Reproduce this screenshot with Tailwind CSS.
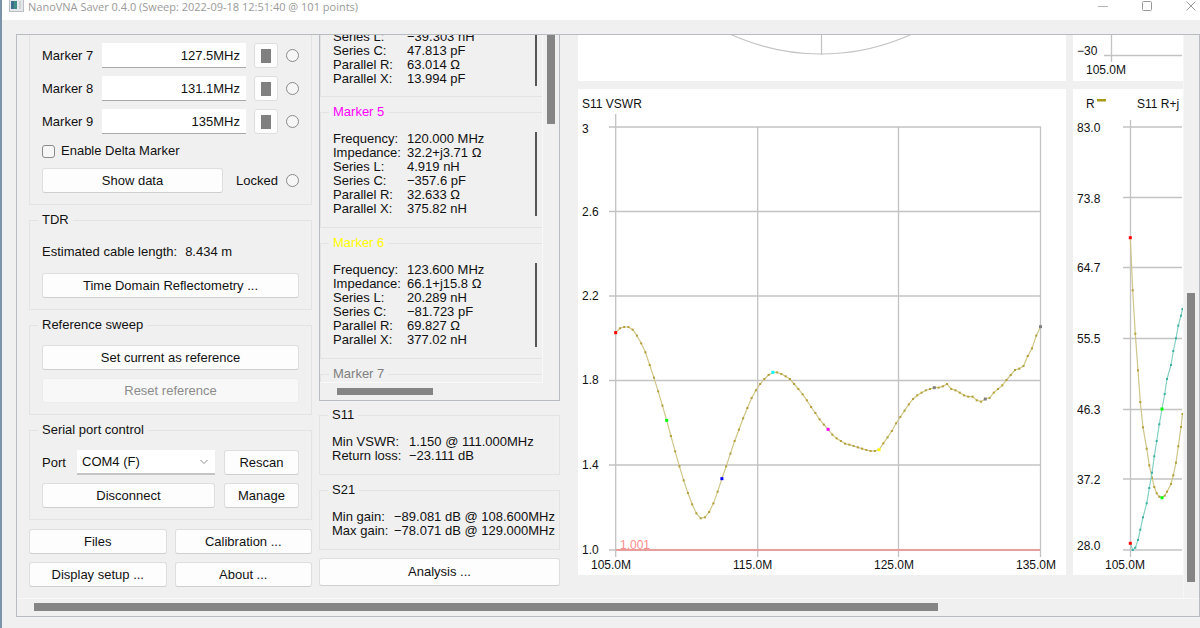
<!DOCTYPE html>
<html lang="en">
<head>
<meta charset="utf-8">
<meta name="viewport" content="width=device-width, initial-scale=1">
<title>NanoVNA Saver 0.4.0</title>
<script src="https://cdn.jsdelivr.net/npm/@tailwindcss/browser@4"></script>
</head>
<body class="flex min-h-screen flex-col overflow-x-hidden border-l-2 border-[#7b93ab] bg-[#f0f0f0] font-['Liberation_Sans',sans-serif] text-[13px] leading-5 text-[#111]">

<header class="flex h-5 items-start justify-between bg-white pl-[7px] pr-1 text-[#9a9a9a]">
  <div class="flex items-start gap-1">
    <svg class="h-3 w-[15px]" viewBox="0 0 15 12" aria-hidden="true">
      <rect x="0.500" y="-3" width="14" height="14.500" fill="#e4e8ea" stroke="#b9bfc4"/>
      <rect x="2" y="1" width="6" height="8" fill="#3f8f86"/>
      <rect x="2" y="1" width="3" height="8" fill="#3d6f8e"/>
      <rect x="10" y="1" width="2" height="8" fill="#cfd3d6"/>
    </svg>
    <h1 class="h-[14px] whitespace-nowrap font-['Open_Sans',sans-serif] text-[11px] leading-[14px]">NanoVNA Saver 0.4.0 (Sweep: 2022-09-18 12:51:40 @ 101 points)</h1>
  </div>
  <div class="flex gap-[34px]">
    <button aria-label="Minimize" class="h-3 w-[10px]"><svg viewBox="0 0 10 12" class="h-3 w-[10px]"><path d="M0 6.500H10" stroke="#b4b4b4"/></svg></button>
    <button aria-label="Maximize" class="h-3 w-[10px]"><svg viewBox="0 0 10 12" class="h-3 w-[10px]"><rect x="0.500" y="1.500" width="9" height="9" rx="1" fill="none" stroke="#999"/></svg></button>
    <button aria-label="Close" class="h-3 w-[10px]"><svg viewBox="0 0 10 12" class="h-3 w-[10px]"><path d="M0.500 1.500L9.500 10.500M9.500 1.500L0.500 10.500" stroke="#999"/></svg></button>
  </div>
</header>

<main class="mt-[14px] ml-[14px] flex flex-col border border-[#b8bbc2]">
  <div class="flex border-b border-[#f8f8f8]">
    <div class="flex min-w-0 flex-1 items-start overflow-hidden pl-3 pb-[11px]">

      <!-- Sweep and device controls -->
      <section class="flex w-[283px] shrink-0 flex-col gap-[5px]">
        <div class="flex flex-col gap-2 border border-t-0 border-[#e3e3e3] px-3 pt-2 pb-[11px]">
          <div class="flex items-center gap-2">
            <label for="m7" class="w-[52px] whitespace-nowrap">Marker 7</label>
            <input id="m7" value="127.5MHz" class="h-[25px] min-w-0 flex-1 border-b border-[#a8a8a8] bg-white pr-[6px] text-right">
            <button aria-label="Marker 7 colour" class="flex h-[25px] w-6 items-center justify-center rounded-[3px] border border-[#dedede] bg-[#fdfdfd]"><span class="h-[14px] w-[10px] bg-[#808080]"></span></button>
            <input type="radio" name="mk" aria-label="Select marker 7" class="size-[13px] appearance-none rounded-full border border-[#8a8a8a] bg-[#f6f6f6]">
          </div>
          <div class="flex items-center gap-2">
            <label for="m8" class="w-[52px] whitespace-nowrap">Marker 8</label>
            <input id="m8" value="131.1MHz" class="h-[25px] min-w-0 flex-1 border-b border-[#a8a8a8] bg-white pr-[6px] text-right">
            <button aria-label="Marker 8 colour" class="flex h-[25px] w-6 items-center justify-center rounded-[3px] border border-[#dedede] bg-[#fdfdfd]"><span class="h-[14px] w-[10px] bg-[#808080]"></span></button>
            <input type="radio" name="mk" aria-label="Select marker 8" class="size-[13px] appearance-none rounded-full border border-[#8a8a8a] bg-[#f6f6f6]">
          </div>
          <div class="flex items-center gap-2">
            <label for="m9" class="w-[52px] whitespace-nowrap">Marker 9</label>
            <input id="m9" value="135MHz" class="h-[25px] min-w-0 flex-1 border-b border-[#a8a8a8] bg-white pr-[6px] text-right">
            <button aria-label="Marker 9 colour" class="flex h-[25px] w-6 items-center justify-center rounded-[3px] border border-[#dedede] bg-[#fdfdfd]"><span class="h-[14px] w-[10px] bg-[#808080]"></span></button>
            <input type="radio" name="mk" aria-label="Select marker 9" class="size-[13px] appearance-none rounded-full border border-[#8a8a8a] bg-[#f6f6f6]">
          </div>
          <div class="flex h-[18px] items-center gap-[6px]">
            <input id="delta" type="checkbox" class="size-[13px] appearance-none rounded-[3px] border border-[#8a8a8a] bg-[#f6f6f6]">
            <label for="delta">Enable Delta Marker</label>
          </div>
          <div class="flex items-center">
            <button class="h-[25px] w-[181px] rounded-[3px] border border-[#dedede] border-b-[#cfcfcf] bg-[#fdfdfd]">Show data</button>
            <label for="locked" class="ml-auto mr-2">Locked</label>
            <input id="locked" type="radio" class="size-[13px] appearance-none rounded-full border border-[#8a8a8a] bg-[#f6f6f6]">
          </div>
        </div>

        <fieldset class="border border-[#e3e3e3] px-3 pb-[11px]">
          <legend class="-ml-1 px-1">TDR</legend>
          <p class="mt-3 flex gap-2"><span>Estimated cable length:</span><span>8.434 m</span></p>
          <button class="mt-[11px] h-[25px] w-full rounded-[3px] border border-[#dedede] border-b-[#cfcfcf] bg-[#fdfdfd]">Time Domain Reflectometry ...</button>
        </fieldset>

        <fieldset class="border border-[#e3e3e3] px-3 pb-[11px]">
          <legend class="-ml-1 px-1">Reference sweep</legend>
          <div class="mt-[10px] flex flex-col gap-2">
            <button class="h-[25px] rounded-[3px] border border-[#dedede] border-b-[#cfcfcf] bg-[#fdfdfd]">Set current as reference</button>
            <button disabled class="h-[25px] rounded-[3px] border border-[#ececec] bg-[#f8f8f8] text-[#8c8c8c]">Reset reference</button>
          </div>
        </fieldset>

        <fieldset class="border border-[#e3e3e3] px-3 pb-[11px]">
          <legend class="-ml-1 px-1">Serial port control</legend>
          <div class="mt-[10px] flex flex-col gap-2">
            <div class="flex items-center">
              <label for="port" class="w-[35px]">Port</label>
              <div class="relative flex-1">
                <select id="port" class="block h-[25px] w-full appearance-none border-b-2 border-[#c4c4c4] bg-white pl-[5px]"><option>COM4 (F)</option></select>
                <svg class="pointer-events-none absolute right-[7px] top-[9px] h-[6px] w-2" viewBox="0 0 8 6"><path d="M0.500 1L4 4.500L7.500 1" fill="none" stroke="#8f8f8f"/></svg>
              </div>
              <button class="ml-[9px] h-[25px] w-[75px] rounded-[3px] border border-[#dedede] border-b-[#cfcfcf] bg-[#fdfdfd]">Rescan</button>
            </div>
            <div class="flex gap-[9px]">
              <button class="h-[25px] flex-1 rounded-[3px] border border-[#dedede] border-b-[#cfcfcf] bg-[#fdfdfd]">Disconnect</button>
              <button class="h-[25px] w-[75px] rounded-[3px] border border-[#dedede] border-b-[#cfcfcf] bg-[#fdfdfd]">Manage</button>
            </div>
          </div>
        </fieldset>

        <div class="mt-1 grid grid-cols-2 gap-2">
          <button class="h-[25px] rounded-[3px] border border-[#dedede] border-b-[#cfcfcf] bg-[#fdfdfd]">Files</button>
          <button class="h-[25px] rounded-[3px] border border-[#dedede] border-b-[#cfcfcf] bg-[#fdfdfd]">Calibration ...</button>
          <button class="h-[25px] rounded-[3px] border border-[#dedede] border-b-[#cfcfcf] bg-[#fdfdfd]">Display setup ...</button>
          <button class="h-[25px] rounded-[3px] border border-[#dedede] border-b-[#cfcfcf] bg-[#fdfdfd]">About ...</button>
        </div>
      </section>

      <!-- Marker readouts -->
      <section class="ml-[7px] flex w-[241px] shrink-0 flex-col">
        <div class="border border-t-0 border-[#b8bbc2]">
          <div class="flex">
            <div class="flex h-[348px] flex-1 flex-col gap-[5px] overflow-hidden border-r border-b border-[#f8f8f8] leading-[14px]">
              <div class="-mt-[5px] flex shrink-0 border-b border-l border-[#e3e3e3] pr-[5px] pb-[10px] pl-3">
                <dl class="grid flex-1 grid-cols-[74px_1fr]">
                  <dt>Series L:</dt><dd>−39.303 nH</dd>
                  <dt>Series C:</dt><dd>47.813 pF</dd>
                  <dt>Parallel R:</dt><dd>63.014 Ω</dd>
                  <dt>Parallel X:</dt><dd>13.994 pF</dd>
                </dl>
                <div class="w-[2px] bg-[#555]"></div>
              </div>
              <fieldset class="shrink-0 border border-r-0 border-[#e3e3e3] pr-[5px] pb-[11px] pl-3">
                <legend class="-ml-1 px-1 leading-5 text-[#ff00ff]">Marker 5</legend>
                <div class="mt-[10px] flex">
                  <dl class="grid flex-1 grid-cols-[74px_1fr]">
                    <dt>Frequency:</dt><dd>120.000 MHz</dd>
                    <dt>Impedance:</dt><dd>32.2+j3.71 Ω</dd>
                    <dt>Series L:</dt><dd>4.919 nH</dd>
                    <dt>Series C:</dt><dd>−357.6 pF</dd>
                    <dt>Parallel R:</dt><dd>32.633 Ω</dd>
                    <dt>Parallel X:</dt><dd>375.82 nH</dd>
                  </dl>
                  <div class="w-[2px] bg-[#555]"></div>
                </div>
              </fieldset>
              <fieldset class="shrink-0 border border-r-0 border-[#e3e3e3] pr-[5px] pb-[11px] pl-3">
                <legend class="-ml-1 px-1 leading-5 text-[#ffff00]">Marker 6</legend>
                <div class="mt-[10px] flex">
                  <dl class="grid flex-1 grid-cols-[74px_1fr]">
                    <dt>Frequency:</dt><dd>123.600 MHz</dd>
                    <dt>Impedance:</dt><dd>66.1+j15.8 Ω</dd>
                    <dt>Series L:</dt><dd>20.289 nH</dd>
                    <dt>Series C:</dt><dd>−81.723 pF</dd>
                    <dt>Parallel R:</dt><dd>69.827 Ω</dd>
                    <dt>Parallel X:</dt><dd>377.02 nH</dd>
                  </dl>
                  <div class="w-[2px] bg-[#555]"></div>
                </div>
              </fieldset>
              <fieldset class="h-20 shrink-0 border border-r-0 border-[#e3e3e3] pl-3">
                <legend class="-ml-1 px-1 leading-5 text-[#808080]">Marker 7</legend>
              </fieldset>
            </div>
            <div class="w-4 pl-1"><div class="h-[89px] w-2 bg-[#858585]"></div></div>
          </div>
          <div class="h-[17px] pt-[5px] pl-[17px]"><div class="h-[7px] w-[96px] bg-[#858585]"></div></div>
        </div>

        <fieldset class="mt-1 border border-[#e3e3e3] px-3 pb-[11px]">
          <legend class="-ml-1 px-1">S11</legend>
          <dl class="mt-[10px] grid grid-cols-[77px_1fr] whitespace-nowrap leading-[14px]">
            <dt>Min VSWR:</dt><dd>1.150 @ 111.000MHz</dd>
            <dt>Return loss:</dt><dd>−23.111 dB</dd>
          </dl>
        </fieldset>
        <fieldset class="mt-[5px] border border-[#e3e3e3] pl-3 pb-[11px]">
          <legend class="-ml-1 px-1">S21</legend>
          <dl class="mt-[10px] grid grid-cols-[62px_1fr] whitespace-nowrap leading-[14px]">
            <dt>Min gain:</dt><dd>−89.081 dB @ 108.600MHz</dd>
            <dt>Max gain:</dt><dd>−78.071 dB @ 129.000MHz</dd>
          </dl>
        </fieldset>
        <button class="mt-2 h-7 rounded-[3px] border border-[#dedede] border-b-[#cfcfcf] bg-[#fdfdfd]">Analysis ...</button>
      </section>

      <!-- Charts -->
      <section class="ml-[18px] flex min-w-0 flex-1 gap-[7px]">
        <div class="flex min-w-0 flex-1 flex-col gap-2">
          <svg class="w-full bg-white" viewBox="578 35 488 46" role="img" aria-label="Smith chart">
            <circle cx="821" cy="-163" r="217" fill="none" stroke="#c2c2c2" stroke-width="1.200"/>
            <path d="M821.500 35V55" stroke="#c2c2c2" stroke-width="1.200"/>
          </svg>
          <svg class="w-full bg-white" viewBox="578 89 488 486" role="img" aria-label="S11 VSWR" font-size="12" fill="#111">
            <path d="M609 127H1041M609 211.500H1041M609 296H1041M609 380.500H1041M609 465H1041M609 550H1041M615.700 114V557M757.700 127V557M898.500 127V557M1040.500 127V557" stroke="#c3c3c3" stroke-width="1.300"/>
            <path d="M616 550H1040" stroke="#f08c8c" stroke-width="1.600"/>
            <g id="vswr"></g>
            <text x="582" y="108">S11 VSWR</text>
            <text x="582" y="133">3</text>
            <text x="582" y="216">2.6</text>
            <text x="582" y="300">2.2</text>
            <text x="582" y="384">1.8</text>
            <text x="582" y="469">1.4</text>
            <text x="582" y="554">1.0</text>
            <text x="620" y="549" fill="#ff8c8c">1.001</text>
            <text x="591" y="569">105.0M</text>
            <text x="733" y="569">115.0M</text>
            <text x="874" y="569">125.0M</text>
            <text x="1016" y="569">135.0M</text>
          </svg>
        </div>
        <div class="flex w-[110px] shrink-0 flex-col gap-2">
          <svg class="h-[46px] w-full bg-white" viewBox="1073 35 110 46" role="img" aria-label="Return loss chart" font-size="12" fill="#111">
            <path d="M1104 55.500H1182M1111.500 35V62" stroke="#c3c3c3" stroke-width="1.300"/>
            <text x="1077" y="55">−30</text>
            <text x="1086" y="74">105.0M</text>
          </svg>
          <svg class="w-full bg-white" viewBox="1073 89 110 486" role="img" aria-label="S11 R+jX" font-size="12" fill="#111">
            <path d="M1123 127H1182M1123 197.500H1182M1123 267.500H1182M1123 338.500H1182M1123 409.500H1182M1123 479H1182M1123 550H1182M1130.500 120V557" stroke="#c3c3c3" stroke-width="1.300"/>
            <rect x="1097" y="99" width="9" height="2.500" fill="#a89a18"/>
            <g id="rjx"></g>
            <text x="1086" y="108">R</text>
            <text x="1137" y="108">S11 R+j</text>
            <text x="1077" y="132">83.0</text>
            <text x="1077" y="203">73.8</text>
            <text x="1077" y="272">64.7</text>
            <text x="1077" y="343">55.5</text>
            <text x="1077" y="414">46.3</text>
            <text x="1077" y="484">37.2</text>
            <text x="1077" y="550">28.0</text>
            <text x="1105" y="569">105.0M</text>
          </svg>
        </div>
      </section>
    </div>
    <div class="w-4 shrink-0 border-l border-[#f6f6f6] pt-[258px] pl-[3px]"><div class="h-[289px] w-2 bg-[#858585]"></div></div>
  </div>
  <div class="h-[17px] pt-1 pl-[17px]"><div class="h-2 w-[78%] max-w-[904px] bg-[#858585]"></div></div>
</main>

<script>
  const NS = 'http://www.w3.org/2000/svg';
  function add(parent, tag, attrs) {
    const el = document.createElementNS(NS, tag);
    for (const k in attrs) el.setAttribute(k, attrs[k]);
    parent.appendChild(el);
  }
  // Draws a sweep: a thin line, a small square per sample, larger squares for markers.
  function series(id, pts, line, dot, markers) {
    const g = document.getElementById(id);
    add(g, 'polyline', { points: pts.map(p => p.join(',')).join(' '), fill: 'none', stroke: line, 'stroke-width': 1.2 });
    pts.forEach(([x, y], i) => {
      const s = markers[i] ? 3 : 2;
      add(g, 'rect', { x: x - s / 2, y: y - s / 2, width: s, height: s, fill: markers[i] || dot });
    });
  }
  // Sample heights in thirds of a pixel, measured down from y = 300.
  const v = [98,85,81,81,89,107,130,157,195,233,274,317,361,408,454,499,541,579,613,640,655,652,636,610,575,536,499,461,423,389,355,324,294,271,252,237,225,217,217,222,229,237,252,267,283,301,321,339,358,374,388,
    404,415,423,431,434,438,442,446,450,453,453,449,430,412,393,370,351,332,313,297,286,278,271,267,263,263,259,252,267,271,278,286,290,290,301,305,297,294,278,267,256,240,225,210,206,198,168,145,107,80];
  series('vswr', v.map((y, i) => [615.7 + 4.248 * i, 300 + y / 3]), '#cfc688', '#b3a03a',
    { 0: '#ff0000', 12: '#00ff00', 25: '#0000ff', 37: '#00ffff', 50: '#ff00ff', 62: '#ffff00', 75: '#808080', 87: '#808080', 100: '#808080' });
  const xs = [1130.3,1132.7,1135.3,1138,1140.3,1143,1146.7,1149.3,1152,1154.3,1156.7,1159.3,1162,1164.7,1167,1171,1173.3,1176,1178.3,1181,1182.5];
  const r = [237.7,290.3,333.7,370.3,402,427.3,448.7,465.3,477.7,487,493.3,496.7,497.7,495.7,491.7,484,475.3,462.7,446.3,427,414];
  const jx = [543.3,550,547.7,540,529.7,517.3,503.3,488,472.7,456.3,441,424.3,409,394,379,365,351,338.3,325.7,315.7,309];
  const mk = { 0: '#ff0000', 12: '#00ff00' };
  series('rjx', xs.map((x, i) => [x, r[i]]), '#cfc688', '#b3a03a', mk);
  series('rjx', xs.map((x, i) => [x, jx[i]]), '#86d0c4', '#3cb0a0', mk);
</script>
</body>
</html>
